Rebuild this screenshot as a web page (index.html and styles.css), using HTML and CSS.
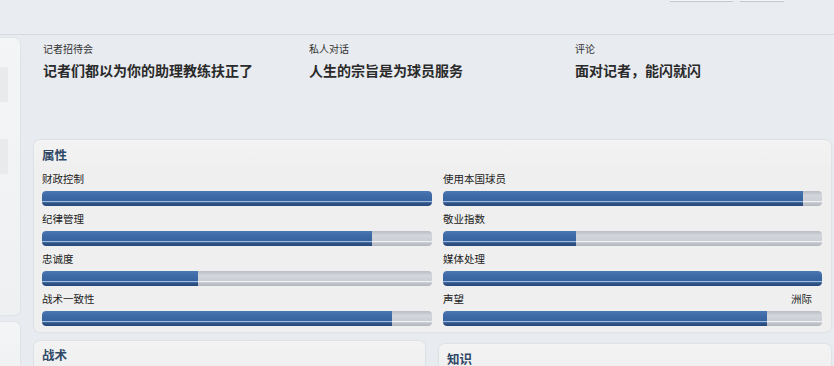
FILE: index.html
```html
<!DOCTYPE html>
<html lang="zh">
<head>
    <meta charset="UTF-8">
    <title>主教练资料</title>
    <link rel="stylesheet" href="styles.css">
</head>
<body>
    <div class="topbar">
        <span class="tab-edge tab-a"></span>
        <span class="tab-edge tab-b"></span>
    </div>

    <div class="layout">
        <div class="sidebar">
            <div class="side-panel side-main">
                <div class="side-strip"></div>
                <div class="side-strip"></div>
            </div>
            <div class="side-panel side-lower"></div>
        </div>

        <div class="main">
            <div class="summary">
                <div class="summary-item">
                    <div class="summary-label">记者招待会</div>
                    <div class="summary-text">记者们都以为你的助理教练扶正了</div>
                </div>
                <div class="summary-item">
                    <div class="summary-label">私人对话</div>
                    <div class="summary-text">人生的宗旨是为球员服务</div>
                </div>
                <div class="summary-item">
                    <div class="summary-label">评论</div>
                    <div class="summary-text">面对记者，能闪就闪</div>
                </div>
            </div>

            <div class="panel attributes">
                <h3 class="panel-title">属性</h3>
                <div class="attr-grid">
                    <div class="attr">
                        <div class="attr-label">财政控制</div>
                        <div class="bar"><div class="bar-fill full" style="width: 100%"></div></div>
                    </div>
                    <div class="attr">
                        <div class="attr-label">使用本国球员</div>
                        <div class="bar"><div class="bar-fill" style="width: 95%"></div></div>
                    </div>
                    <div class="attr">
                        <div class="attr-label">纪律管理</div>
                        <div class="bar"><div class="bar-fill" style="width: 84.6%"></div></div>
                    </div>
                    <div class="attr">
                        <div class="attr-label">敬业指数</div>
                        <div class="bar"><div class="bar-fill" style="width: 35%"></div></div>
                    </div>
                    <div class="attr">
                        <div class="attr-label">忠诚度</div>
                        <div class="bar"><div class="bar-fill" style="width: 40%"></div></div>
                    </div>
                    <div class="attr">
                        <div class="attr-label">媒体处理</div>
                        <div class="bar"><div class="bar-fill full" style="width: 100%"></div></div>
                    </div>
                    <div class="attr">
                        <div class="attr-label">战术一致性</div>
                        <div class="bar"><div class="bar-fill" style="width: 89.7%"></div></div>
                    </div>
                    <div class="attr">
                        <div class="attr-label">声望 <span class="attr-value">洲际</span></div>
                        <div class="bar"><div class="bar-fill" style="width: 85.5%"></div></div>
                    </div>
                </div>
            </div>

            <div class="lower">
                <div class="panel lower-left">
                    <h3 class="panel-title">战术</h3>
                </div>
                <div class="panel lower-right">
                    <h3 class="panel-title">知识</h3>
                </div>
            </div>
        </div>
    </div>
</body>
</html>
```

FILE: styles.css
```css
body {
    margin: 0;
    width: 834px;
    height: 366px;
    overflow: hidden;
    background: #e8ebef;
    font-family: "Noto Sans CJK SC", "Noto Sans", sans-serif;
    color: #2b2b2b;
}
.topbar {
    height: 34px;
    border-bottom: 1px solid #d6dade;
    background: #e9ecf0;
    display: flex;
    justify-content: flex-end;
    align-items: flex-start;
    padding-right: 50px;
}
.tab-edge {
    height: 1px;
    border-bottom: 1px solid #c3c7cc;
    background: #f4f5f6;
}
.tab-a {
    width: 63px;
    margin-right: 7px;
}
.tab-b {
    width: 44px;
}
.layout {
    display: flex;
    gap: 14px;
    padding-top: 3px;
}
.sidebar {
    width: 20px;
    display: flex;
    flex-direction: column;
    gap: 7px;
}
.side-panel {
    background: linear-gradient(#f4f5f6, #eff0f2);
    border-radius: 0 6px 6px 0;
    box-shadow: 0 0 2px rgba(0, 0, 0, 0.12);
}
.side-main {
    height: 277px;
    padding-top: 29px;
    box-sizing: border-box;
    display: flex;
    flex-direction: column;
    gap: 37px;
}
.side-strip {
    width: 8px;
    height: 35px;
    background: #e9eaec;
}
.side-lower {
    height: 60px;
}
.main {
    width: 797px;
}
.summary {
    display: flex;
    height: 102px;
    padding: 5px 0 0 9px;
    box-sizing: border-box;
}
.summary-item {
    flex: none;
    width: 266px;
}
.summary-label {
    font-size: 10px;
    line-height: 12px;
    color: #333;
}
.summary-text {
    margin-top: 5px;
    font-size: 14px;
    line-height: 20px;
    font-weight: bold;
    color: #2a2a2a;
}
.panel {
    background: linear-gradient(#f3f3f3, #efefef 30px);
    border-radius: 6px;
    box-shadow: 0 0 2px rgba(0, 0, 0, 0.15);
}
.attributes {
    height: 192px;
    padding: 7px 9px 6px 8px;
    box-sizing: border-box;
}
.panel-title {
    margin: 0;
    font-size: 12.5px;
    line-height: 16px;
    font-weight: bold;
    color: #2f4866;
}
.attr-grid {
    margin-top: 9px;
    display: grid;
    grid-template-columns: 390px 379px;
    column-gap: 11px;
    row-gap: 6px;
}
.attr-label {
    display: flex;
    justify-content: space-between;
    font-size: 10.5px;
    line-height: 14px;
    color: #222;
}
.attr-value {
    margin-right: 10px;
}
.bar {
    margin-top: 5px;
    height: 15px;
    border-radius: 4px;
    overflow: hidden;
    background: linear-gradient(#b9bdc4, #d3d6db 30%, #cacdd3 68%, #f1f2f4 70%, #c3c7cd 78%, #b3b7be);
}
.bar-fill {
    height: 100%;
    border-radius: 4px 0 0 4px;
    background: linear-gradient(#4a78b3, #3d6aa5 35%, #3763a0 68%, #9db8da 70%, #30578d 78%, #274677);
}
.bar-fill.full {
    border-radius: 4px;
}
.lower {
    display: flex;
    gap: 14px;
    margin-top: 9px;
}
.lower-left {
    width: 391px;
    height: 40px;
    padding: 6px 8px;
    box-sizing: border-box;
}
.lower-right {
    width: 392px;
    height: 40px;
    margin-top: 3px;
    padding: 7px 8px;
    box-sizing: border-box;
}
```
